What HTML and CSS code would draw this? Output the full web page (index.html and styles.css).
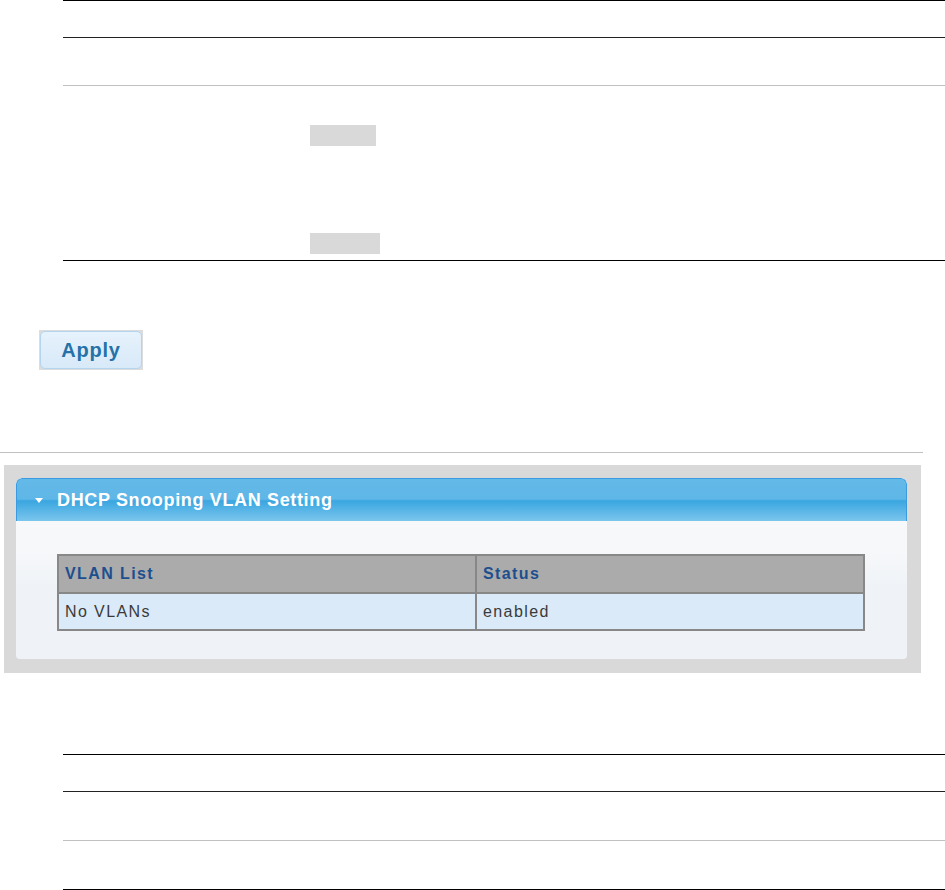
FILE: index.html
```html
<!DOCTYPE html>
<html lang="en">
<head>
    <meta charset="UTF-8">
    <meta name="viewport" content="width=device-width, initial-scale=1.0">
    <title>DHCP Snooping VLAN Setting</title>
    <link rel="stylesheet" href="styles.css">
</head>
<body>
    <!-- parameter table (text rows left blank) -->
    <div class="doc-table">
        <div class="doc-row row-head"></div>
        <div class="doc-row row-mid"></div>
        <div class="doc-row row-fields">
            <div class="field-label"></div>
            <div class="field-values">
                <span class="field-box box1"></span>
                <span class="field-box box2"></span>
            </div>
        </div>
    </div>

    <div class="apply-wrap">
        <button class="apply-btn">Apply</button>
    </div>

    <hr class="sep">

    <section class="panel">
        <div class="card">
            <div class="card-head">
                <span class="arrow"></span>
                <span class="card-title">DHCP Snooping VLAN Setting</span>
            </div>
            <div class="card-body">
                <table class="vlan-table">
                    <tr>
                        <th class="col-list">VLAN List</th>
                        <th>Status</th>
                    </tr>
                    <tr>
                        <td>No VLANs</td>
                        <td>enabled</td>
                    </tr>
                </table>
            </div>
        </div>
    </section>

    <!-- display table (text rows left blank) -->
    <div class="doc-table bottom-table">
        <div class="doc-row row-head"></div>
        <div class="doc-row row-mid2"></div>
        <div class="doc-row row-last"></div>
    </div>
</body>
</html>
```

FILE: styles.css
```css
body {
    margin: 0;
    font-family: "Liberation Sans", Arial, sans-serif;
    background-color: #fff;
    color: #333;
}

.doc-table {
    margin-left: 63px;
    border-top: 1px solid #000;
}

.doc-row {
    border-bottom: 1px solid #222;
}

.row-head {
    height: 36px;
}

.row-mid {
    height: 47px;
    border-bottom-color: #c0c0c0;
}

.row-fields {
    display: grid;
    grid-template-columns: 247px 1fr;
    height: 174px;
    border-bottom-color: #000;
}

.field-values {
    display: flex;
    flex-direction: column;
    align-items: flex-start;
    padding-top: 39px;
    gap: 87px;
}

.field-box {
    display: block;
    height: 21px;
    background-color: #d9d9d9;
}

.box1 {
    width: 66px;
}

.box2 {
    width: 70px;
}

.apply-wrap {
    margin: 69px 0 0 39px;
    width: 102px;
    padding: 1px;
    background-color: #dcdcdc;
}

.apply-btn {
    display: block;
    width: 102px;
    height: 38px;
    padding: 0;
    border: 1px solid #b4d5ef;
    border-radius: 5px;
    background: linear-gradient(#e6f2fc, #d8e9f8);
    color: #2571a8;
    font-family: "Liberation Sans", Arial, sans-serif;
    font-size: 20px;
    font-weight: bold;
    letter-spacing: 0.8px;
}

.sep {
    margin: 82px 0 0 0;
    width: 923px;
    height: 0;
    border: none;
    border-top: 1px solid #c0c0c0;
}

.panel {
    margin: 12px 0 0 4px;
    width: 891px;
    padding: 13px 14px 14px 12px;
    background-color: #d9d9d9;
}

.card {
    border-radius: 6px 6px 4px 4px;
    overflow: hidden;
    background: linear-gradient(#f8f9fb, #f7f8fa 40%, #eff3f7 60%, #eff3f7);
}

.card-head {
    display: flex;
    align-items: center;
    height: 42px;
    padding-left: 18px;
    border: 1px solid #3b9be0;
    border-bottom: none;
    border-radius: 6px 6px 0 0;
    background: linear-gradient(#63b9e8, #5fb7e7 48%, #3aa6e0 52%, #7bc6ed);
}

.arrow {
    width: 0;
    height: 0;
    border-left: 4px solid transparent;
    border-right: 4px solid transparent;
    border-top: 5px solid #fff;
    margin-right: 14px;
    margin-top: 1px;
}

.card-title {
    color: #fff;
    font-size: 18px;
    font-weight: bold;
    letter-spacing: 0.65px;
}

.card-body {
    padding: 33px 41px 28px 41px;
}

.vlan-table {
    width: 808px;
    border-collapse: collapse;
    border: 2px solid #888;
    font-size: 16px;
    letter-spacing: 1.4px;
}

.vlan-table th,
.vlan-table td {
    border: 2px solid #888;
    text-align: left;
    padding: 0 6px;
}

.vlan-table th {
    height: 36px;
    background-color: #ababab;
    color: #1d4f8e;
    font-weight: bold;
}

.vlan-table td {
    height: 35px;
    background-color: #dbeaf8;
    color: #3a3a3a;
}

.col-list {
    width: 404px;
}

.bottom-table {
    margin-top: 81px;
}

.row-mid2 {
    height: 48px;
    border-bottom-color: #c0c0c0;
}

.row-last {
    height: 48px;
    border-bottom-color: #000;
}
```
